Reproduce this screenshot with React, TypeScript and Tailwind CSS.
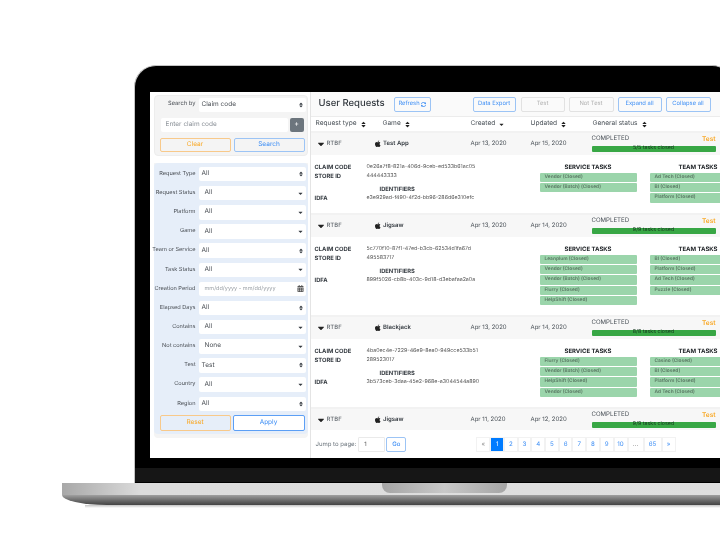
import { FaApple, FaCalendarAlt, FaCaretDown, FaSort, FaSyncAlt } from "react-icons/fa"

const filters = [
  { label: "Request Type", value: "All", kind: "sort" },
  { label: "Request Status", value: "All", kind: "caret" },
  { label: "Platform", value: "All", kind: "caret" },
  { label: "Game", value: "All", kind: "caret" },
  { label: "Team or Service", value: "All", kind: "sort" },
  { label: "Task Status", value: "All", kind: "caret" },
  { label: "Creation Period", value: "mm/dd/yyyy - mm/dd/yyyy", kind: "date" },
  { label: "Elapsed Days", value: "All", kind: "sort" },
  { label: "Contains", value: "All", kind: "caret" },
  { label: "Not contains", value: "None", kind: "caret" },
  { label: "Test", value: "Test", kind: "sort" },
  { label: "Country", value: "All", kind: "caret" },
  { label: "Region", value: "All", kind: "sort" },
]

const requests = [
  {
    game: "Test App",
    created: "Apr 13, 2020",
    updated: "Apr 15, 2020",
    closed: "5/5 tasks closed",
    claim: "0e26a7f8-821a-406d-9ceb-ed533b61ac05",
    store: "444443333",
    idfa: "e3e929ad-f490-4f2d-bb96-286d6e310efc",
    service: ["Vendor (Closed)", "Vendor (Batch) (Closed)"],
    team: ["Ad Tech (Closed)", "BI (Closed)", "Platform (Closed)"],
    height: "h-[58px]",
  },
  {
    game: "Jigsaw",
    created: "Apr 13, 2020",
    updated: "Apr 14, 2020",
    closed: "9/9 tasks closed",
    claim: "5c770f10-87f1-47ed-b3cb-62534d1fa67d",
    store: "495583717",
    idfa: "899f5026-cb8b-403c-9d18-d3ebafaa2a0a",
    service: ["Leanplum (Closed)", "Vendor (Closed)", "Vendor (Batch) (Closed)", "Flurry (Closed)", "HelpShift (Closed)"],
    team: ["BI (Closed)", "Platform (Closed)", "Ad Tech (Closed)", "Puzzle (Closed)"],
    height: "h-[78px]",
  },
  {
    game: "Blackjack",
    created: "Apr 13, 2020",
    updated: "Apr 14, 2020",
    closed: "8/8 tasks closed",
    claim: "4ba0ec4e-7229-46e9-8ea0-949cce533b51",
    store: "289523017",
    idfa: "3b573ceb-3daa-45e2-968e-a3044544a890",
    service: ["Flurry (Closed)", "Vendor (Batch) (Closed)", "HelpShift (Closed)", "Vendor (Closed)"],
    team: ["Casino (Closed)", "BI (Closed)", "Platform (Closed)", "Ad Tech (Closed)"],
    height: "h-[68px]",
  },
]

const pages = [
  { label: "«", box: "w-[14px] text-[#888]" },
  { label: "1", box: "w-[13.7px] bg-[#007bff] text-white" },
  { label: "2", box: "w-[13.7px] text-[#3b8df5]" },
  { label: "3", box: "w-[13.7px] text-[#3b8df5]" },
  { label: "4", box: "w-[13.7px] text-[#3b8df5]" },
  { label: "5", box: "w-[13.7px] text-[#3b8df5]" },
  { label: "6", box: "w-[13.7px] text-[#3b8df5]" },
  { label: "7", box: "w-[13.7px] text-[#3b8df5]" },
  { label: "8", box: "w-[13.7px] text-[#3b8df5]" },
  { label: "9", box: "w-[13.7px] text-[#3b8df5]" },
  { label: "10", box: "w-[14px] text-[#3b8df5]" },
  { label: "...", box: "w-[16px] text-[#888]" },
  { label: "65", box: "w-[18px] text-[#3b8df5]" },
  { label: "»", box: "w-[14px] text-[#3b8df5]" },
]

function Field({ value, kind }: { value: string; kind: string }) {
  return (
    <div className="flex h-[14.5px] w-[107px] shrink-0 items-center justify-between rounded-[2px] bg-white pr-[2px] pl-[3px] text-[6.5px] whitespace-nowrap text-[#4a4f55]">
      <span className={kind === "caret" ? "pl-[3px]" : kind === "date" ? "pl-[3px] text-[5.5px] text-[#9aa0a6]" : ""}>{value}</span>
      {kind === "sort" && <FaSort className="text-[6px] text-[#343a40]" />}
      {kind === "caret" && <FaCaretDown className="text-[7px] text-[#343a40]" />}
      {kind === "date" && <FaCalendarAlt className="text-[7px] text-[#555]" />}
    </div>
  )
}

function TaskColumn({ title, tasks }: { title: string; tasks: string[] }) {
  return (
    <div className="flex w-[97px] shrink-0 flex-col">
      <div className="mb-[0.5px] text-center text-[6px] leading-[9px] font-bold text-[#212529]">{title}</div>
      {tasks.map((task) => (
        <div key={task} className="mb-[1px] flex h-[9.4px] items-center rounded-[1px] bg-[#9bd5ab] pl-[5px] text-[4.8px] font-bold whitespace-nowrap text-[#5f8069]">
          {task}
        </div>
      ))}
    </div>
  )
}

type Request = Omit<(typeof requests)[number], "height"> & { height?: string }

function RequestRow({ request }: { request: Request }) {
  return (
    <div className="border-b-2 border-[#f2f2f2]">
      <div className="grid h-[22px] grid-cols-[58px_97px_60px_61px_124px] items-center bg-[#f7f7f7] pl-[5px] text-[6px] text-[#495057]">
        <div className="flex items-center gap-[1px]">
          <FaCaretDown className="text-[10px] text-[#222]" />
          RTBF
        </div>
        <div className="flex items-center gap-[2px] font-semibold text-[#343a40]">
          <FaApple className="text-[7.5px] text-[#222]" />
          {request.game}
        </div>
        <div>{request.created}</div>
        <div>{request.updated}</div>
        <div className="self-start pt-[1px]">
          <div className="flex h-[11px] items-center justify-between text-[6.1px] leading-none">
            <span>COMPLETED</span>
            <span className="text-[6.5px] font-semibold text-[#f9a825]">Test</span>
          </div>
          <div className="mt-[1px] flex h-[6.5px] items-center justify-center rounded-[1px] bg-[#38a745] text-[5.3px] leading-none text-[#14361d]">{request.closed}</div>
        </div>
      </div>
      {request.height && (
        <div className={`flex overflow-hidden pt-[8.5px] pl-[4px] ${request.height}`}>
          <div className="w-[225px] shrink-0 text-[5.3px] leading-[9px] text-[#555]">
            <div className="flex">
              <span className="w-[52px] text-[5.8px] font-bold text-[#343a40]">CLAIM CODE</span>
              {request.claim}
            </div>
            <div className="flex">
              <span className="w-[52px] text-[5.8px] font-bold text-[#343a40]">STORE ID</span>
              {request.store}
            </div>
            <div className="mt-[4px] pl-[65px] text-[5.8px] font-bold text-[#343a40]">IDENTIFIERS</div>
            <div className="flex">
              <span className="w-[52px] text-[5.8px] font-bold text-[#343a40]">IDFA</span>
              {request.idfa}
            </div>
          </div>
          <div className="flex gap-[13px]">
            <TaskColumn title="SERVICE TASKS" tasks={request.service} />
            <TaskColumn title="TEAM TASKS" tasks={request.team} />
          </div>
        </div>
      )}
    </div>
  )
}

function Sortable({ label, caret }: { label: string; caret?: boolean }) {
  return (
    <div className="flex items-center gap-[3px] whitespace-nowrap">
      {label}
      {caret ? <FaCaretDown className="text-[7px] text-[#222]" /> : <FaSort className="text-[7px] text-[#222]" />}
    </div>
  )
}

export default function App() {
  return (
    <div className="h-[540px] w-[720px] overflow-hidden bg-white font-['Inter',sans-serif] blur-[0.3px] [text-rendering:geometricPrecision]">
      <div className="mt-[65px] ml-[134px] h-[418px] w-[600px] rounded-t-[22px] border-t-[1.5px] border-l-[1.5px] border-[#c4c4c4] bg-black pt-[25.5px] pl-[14.5px]">
        <div className="flex h-[366px] w-[570px] overflow-hidden bg-white">
          <aside className="w-[161px] shrink-0 border-r border-[#e4e4e4] pt-[3px] pr-[2px] pl-[4px]">
            <div className="h-[61px] rounded-[4px] border border-[#ededed] bg-[#f4f4f4] pt-[2px] pr-[1px] pl-[5px]">
              <div className="flex items-center justify-end gap-[3px] text-[5.8px] whitespace-nowrap text-[#4a4f55]">
                Search by
                <Field value="Claim code" kind="sort" />
              </div>
              <div className="mt-[5.5px] flex gap-[2px] pr-[2px] pl-[1px]">
                <div className="flex h-[14px] flex-1 items-center rounded-[2px] bg-white pl-[5px] text-[6.5px] text-[#8a9097]">Enter claim code</div>
                <div className="flex h-[14px] w-[14px] items-center justify-center rounded-[2px] bg-[#6c757d] text-[7px] text-white">+</div>
              </div>
              <div className="mt-[6px] flex gap-[3px] pr-[1px]">
                <div className="flex h-[14.5px] w-[71px] items-center justify-center rounded-[2px] border border-[#f8c98a] text-[6.5px] text-[#f9a825]">Clear</div>
                <div className="flex h-[14.5px] w-[71px] items-center justify-center rounded-[2px] border border-[#9cc4f5] text-[6.5px] text-[#3b8df5]">Search</div>
              </div>
            </div>
            <div className="mt-[7px] h-[275px] rounded-b-[4px] bg-[#f4f4f4]">
              <div className="flex h-[271px] flex-col rounded-[4px] bg-[#e6eef9] px-[2px] pt-[2px]">
                {filters.map((filter) => (
                  <div key={filter.label} className="flex h-[19.15px] shrink-0 items-center justify-end gap-[3px] text-[5.6px] whitespace-nowrap text-[#4a4f55]">
                    {filter.label}
                    <Field value={filter.value} kind={filter.kind} />
                  </div>
                ))}
                <div className="mt-[2px] flex gap-[2px] pl-[4px]">
                  <div className="flex h-[15.5px] w-[71px] items-center justify-center rounded-[2px] border border-[#f8c98a] text-[6.5px] text-[#f9a825]">Reset</div>
                  <div className="flex h-[15.5px] w-[72px] items-center justify-center rounded-[2px] border-[1.5px] border-[#5c9ff5] bg-white text-[6.5px] text-[#3b8df5]">Apply</div>
                </div>
              </div>
            </div>
          </aside>
          <main className="flex w-[409px] shrink-0 flex-col">
            <header className="flex h-[25px] items-center border-b border-[#ececec] bg-[#fafafa] pt-[2px] pl-[8px] whitespace-nowrap">
              <h1 className="w-[75px] text-[9.5px] font-medium text-[#343a40]">User Requests</h1>
              <div className="flex h-[15px] w-[37px] items-center justify-center gap-[1px] rounded-[2px] border border-[#9cc4f5] text-[5.8px] text-[#3b8df5]">
                Refresh
                <FaSyncAlt className="text-[5px]" />
              </div>
              <div className="ml-[42px] flex h-[15px] w-[43px] items-center justify-center rounded-[2px] border border-[#9cc4f5] text-[5.8px] text-[#3b8df5]">Data Export</div>
              <div className="ml-[5px] flex h-[15px] w-[44px] items-center justify-center rounded-[2px] border border-[#e2e2e2] text-[5.8px] text-[#b0b0b0]">Test</div>
              <div className="ml-[4px] flex h-[15px] w-[45px] items-center justify-center rounded-[2px] border border-[#e2e2e2] text-[5.8px] text-[#b0b0b0]">Not Test</div>
              <div className="ml-[4px] flex h-[15px] w-[44px] items-center justify-center rounded-[2px] border border-[#9cc4f5] text-[5.8px] text-[#3b8df5]">Expand all</div>
              <div className="ml-[4px] flex h-[15px] w-[45px] items-center justify-center rounded-[2px] border border-[#9cc4f5] text-[5.8px] text-[#3b8df5]">Collapse all</div>
            </header>
            <div className="grid h-[16px] shrink-0 grid-cols-[67px_88px_60px_62px_1fr] items-center border-b-2 border-[#f2f2f2] pt-[1.5px] pl-[5px] text-[6.6px] text-[#495057]">
              <Sortable label="Request type" />
              <Sortable label="Game" />
              <Sortable label="Created" caret />
              <Sortable label="Updated" />
              <Sortable label="General status" />
            </div>
            <div className="h-[297px] overflow-hidden">
              {requests.map((request) => (
                <RequestRow key={request.game} request={request} />
              ))}
              <RequestRow
                request={{ ...requests[1], created: "Apr 11, 2020", updated: "Apr 12, 2020", height: undefined }}
              />
            </div>
            <footer className="flex h-[28px] items-center bg-white pt-[2px] pl-[5px] text-[6px] whitespace-nowrap text-[#6c757d]">
              Jump to page:
              <div className="ml-[2px] flex h-[15px] w-[27px] items-center rounded-[1px] border border-[#eaeaea] pl-[5px] text-[#555]">1</div>
              <div className="ml-[1px] flex h-[15px] w-[20px] items-center justify-center rounded-[2px] border border-[#9cc4f5] font-medium text-[#3b8df5]">Go</div>
              <div className="mr-[44px] ml-auto flex h-[15px] text-[6.2px]">
                {pages.map((page) => (
                  <div key={page.label} className={`flex items-center justify-center border border-[#f2f2f2] ${page.box}`}>
                    {page.label}
                  </div>
                ))}
              </div>
            </footer>
          </main>
        </div>
        <div className="mt-[10px] -ml-[14.5px] h-[14px] bg-[#161616]" />
      </div>
      <div className="relative ml-[62px] h-[12px] w-[658px] bg-gradient-to-r from-[#a8a8a8] via-[#dcdcdc] via-[12%] to-[#dfdfdf]">
        <div className="absolute top-0 left-[320px] h-[10px] w-[125px] rounded-b-[8px] bg-gradient-to-r from-[#a5a5a5] via-[#c8c8c8] to-[#a5a5a5]" />
      </div>
      <div className="ml-[62px] h-[10px] w-[658px] rounded-bl-[45px_10px] bg-gradient-to-b from-[#a0a0a0] via-[#6f6f6f] to-[#444]" />
      <div className="ml-[85px] h-[3px] w-[635px] bg-gradient-to-b from-[#c4c4c4] to-white" />
    </div>
  )
}
